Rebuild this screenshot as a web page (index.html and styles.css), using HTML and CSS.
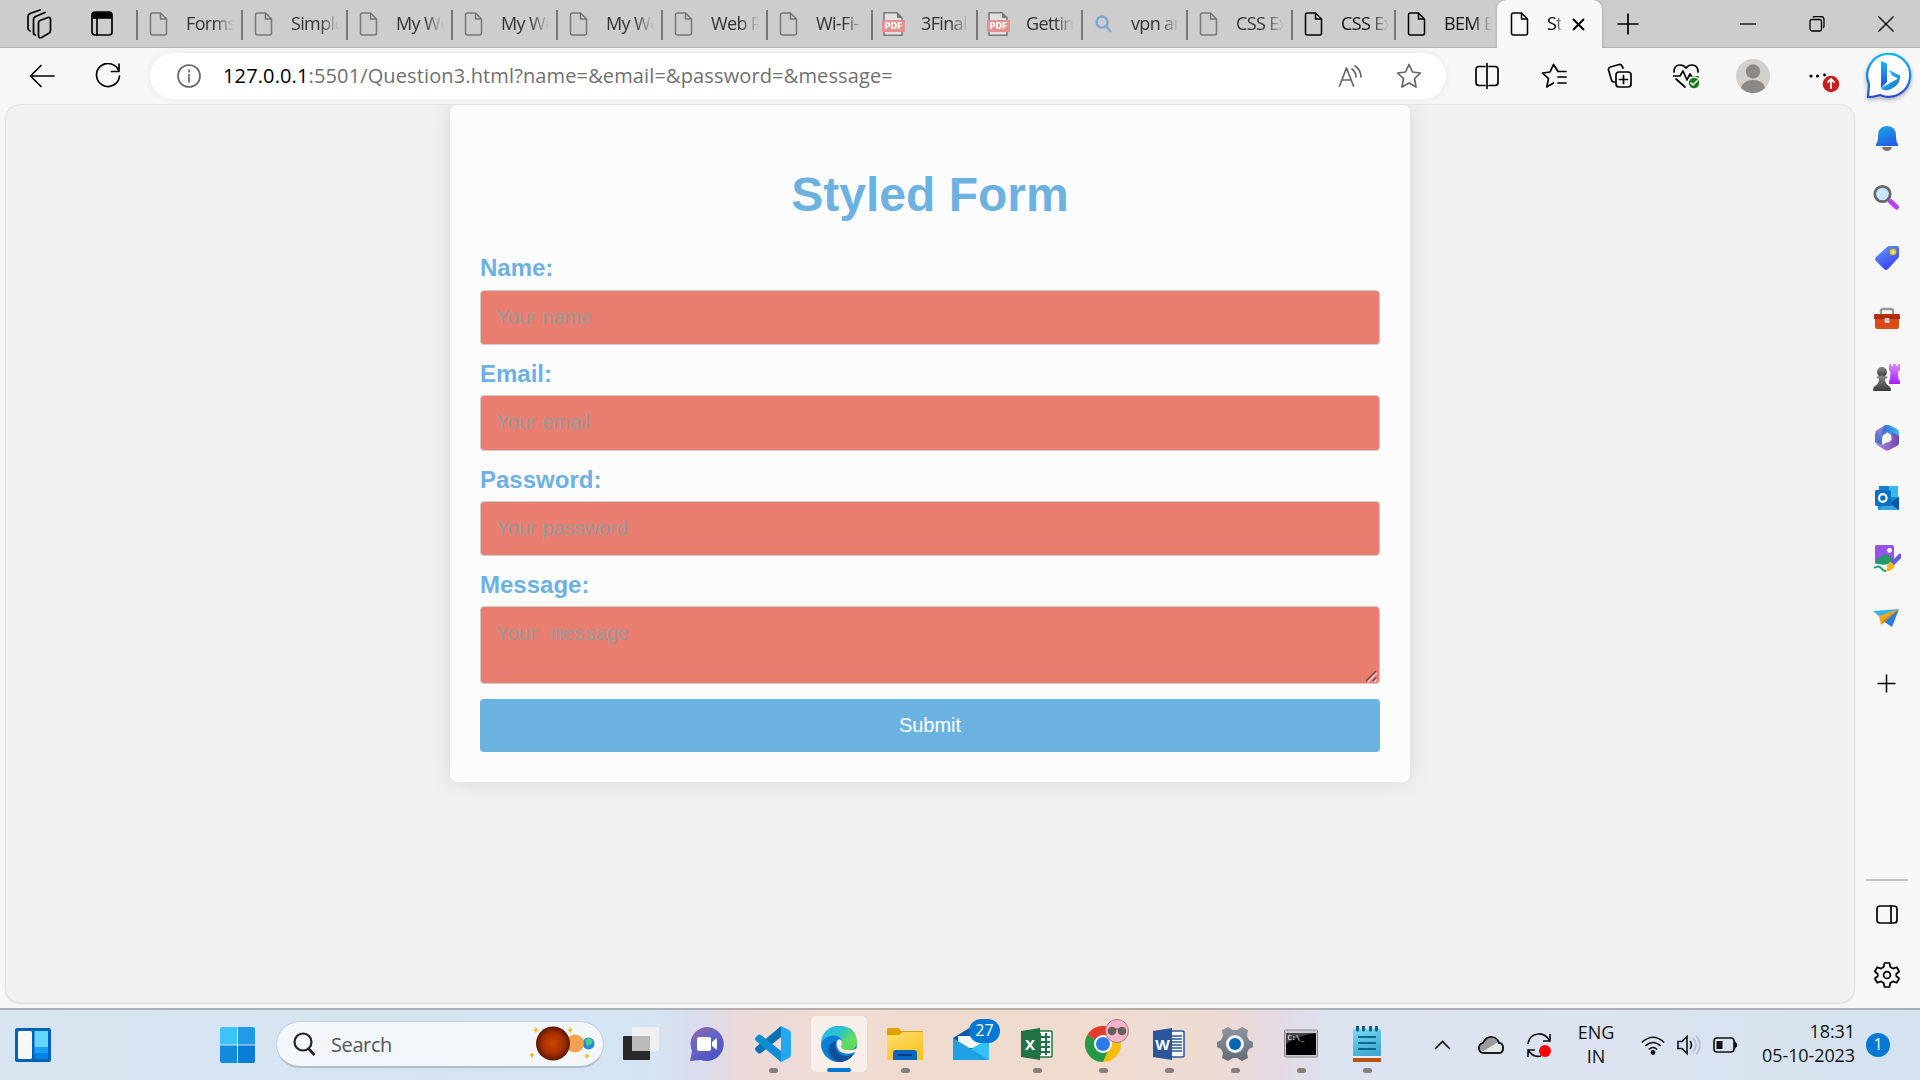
FILE: index.html
```html
<!DOCTYPE html>
<html lang="en">
<head>
<meta charset="utf-8">
<title>Styled Form</title>
<link rel="stylesheet" href="styles.css">
</head>
<body>
<svg class="defs" aria-hidden="true">
  <defs>
    <symbol id="page" viewBox="0 0 18 24"><path d="M3 1h8l6 6v14q0 2-2 2H3q-2 0-2-2V3q0-2 2-2zM11 1v6h6" fill="none" stroke="currentColor" stroke-width="1.5" stroke-linejoin="round"/></symbol>
    <symbol id="pdf" viewBox="0 0 23 24"><path d="M2 .8h13l5 5v17.4H2z" fill="#e2e2e2" stroke="#777" stroke-width="1.5"/><path d="M15 1v5h5z" fill="#777"/><rect y="8" width="23" height="12" rx="1" fill="#e58f8f"/><text x="11.5" y="17.3" text-anchor="middle" class="pdf-text">PDF</text></symbol>
    <linearGradient id="blue" x2="1" y2="1"><stop stop-color="#48cdff"/><stop offset="1" stop-color="#006fd0"/></linearGradient>
    <linearGradient id="bell" x2=".4" y2="1"><stop stop-color="#18a8e0"/><stop offset="1" stop-color="#2463e8"/></linearGradient>
    <linearGradient id="tag" x2=".6" y2="1"><stop stop-color="#62a2ff"/><stop offset="1" stop-color="#3b3cf0"/></linearGradient>
    <linearGradient id="purple" x2="0" y2="1"><stop stop-color="#d98cff"/><stop offset="1" stop-color="#a31fff"/></linearGradient>
    <linearGradient id="dark" x2="0" y2="1"><stop stop-color="#888"/><stop offset="1" stop-color="#3a3a3a"/></linearGradient>
    <linearGradient id="orange" x2="0" y2="1"><stop stop-color="#b83200"/><stop offset="1" stop-color="#a52c00"/></linearGradient>
    <linearGradient id="yellow" x2=".6" y2="1"><stop stop-color="#ffe070"/><stop offset="1" stop-color="#ffc222"/></linearGradient>
    <linearGradient id="chat" x1="0" y1="0" x2=".7" y2="1"><stop stop-color="#9a63a5"/><stop offset=".45" stop-color="#6866c4"/><stop offset="1" stop-color="#4d51c4"/></linearGradient>
    <linearGradient id="edgeTop" x2="1" y2=".5"><stop stop-color="#2cb6f2"/><stop offset=".5" stop-color="#2ac3cf"/><stop offset="1" stop-color="#6be04a"/></linearGradient>
    <linearGradient id="cyan" x2=".4" y2="1"><stop stop-color="#7edcf2"/><stop offset="1" stop-color="#41a9d2"/></linearGradient>
    <linearGradient id="steel" x2="0" y2="1"><stop stop-color="#8d969e"/><stop offset="1" stop-color="#626d77"/></linearGradient>
    <radialGradient id="planet"><stop stop-color="#cf4300"/><stop offset=".6" stop-color="#a83000"/><stop offset="1" stop-color="#5c1800"/></radialGradient>
    <linearGradient id="bing" x2="0" y2="1"><stop stop-color="#15b8ee"/><stop offset="1" stop-color="#2649dc"/></linearGradient>
    <linearGradient id="m365a" x2="1" y2="0"><stop stop-color="#3a70d2"/><stop offset="1" stop-color="#35bce8"/></linearGradient>
    <linearGradient id="m365b" x2="1" y2="0"><stop stop-color="#b58be0"/><stop offset="1" stop-color="#6d48ae"/></linearGradient>
    <linearGradient id="m365c" x2="0" y2="1"><stop stop-color="#a983dc"/><stop offset="1" stop-color="#2b72cc"/></linearGradient>
  </defs>
</svg>

<div class="desktop">
  <header class="tabstrip">
    <div class="strip-tools">
      <svg width="26" height="30" viewBox="0 0 26 30" class="line"><path d="M14 11.500l8-3q2.500-.5 2.500 2v11q0 2-2 3l-7 4q-3 1-3-2V13.500q0-1.500 1.500-2zM7.500 24V10.500q0-2 2-3l9.500-4M9.500 26q-2 0-2-3M2 20V7.500q0-2 2-3L14 1M4 22q-2-1-2-3"/></svg>
      <svg width="22" height="26" viewBox="0 0 22 26" class="line"><rect x="1" y="1" width="20" height="23" rx="3"/><path d="M2 2h18v5H2z" fill="#000"/><path d="M6 7v17"/></svg>
    </div>
    <nav class="tabs">
      <div class="tab"><svg class="favicon"><use href="#page"/></svg><span class="tab-title">Forms i</span></div>
      <div class="tab"><svg class="favicon"><use href="#page"/></svg><span class="tab-title">Simple</span></div>
      <div class="tab"><svg class="favicon"><use href="#page"/></svg><span class="tab-title">My Web</span></div>
      <div class="tab"><svg class="favicon"><use href="#page"/></svg><span class="tab-title">My Web</span></div>
      <div class="tab"><svg class="favicon"><use href="#page"/></svg><span class="tab-title">My Web</span></div>
      <div class="tab"><svg class="favicon"><use href="#page"/></svg><span class="tab-title">Web Pa</span></div>
      <div class="tab"><svg class="favicon"><use href="#page"/></svg><span class="tab-title">Wi-Fi-</span></div>
      <div class="tab"><svg class="favicon wide"><use href="#pdf"/></svg><span class="tab-title">3Final</span></div>
      <div class="tab"><svg class="favicon wide"><use href="#pdf"/></svg><span class="tab-title">Getting</span></div>
      <div class="tab"><svg class="favicon find" viewBox="0 0 18 24"><circle cx="7.500" cy="10" r="5.500"/><path d="M11.500 14l5 6"/></svg><span class="tab-title">vpn an</span></div>
      <div class="tab"><svg class="favicon"><use href="#page"/></svg><span class="tab-title">CSS Ex</span></div>
      <div class="tab loaded"><svg class="favicon"><use href="#page"/></svg><span class="tab-title">CSS Ex</span></div>
      <div class="tab loaded"><svg class="favicon"><use href="#page"/></svg><span class="tab-title">BEM Ex</span></div>
      <div class="tab active"><svg class="favicon"><use href="#page"/></svg><span class="tab-title">Sty</span><svg class="close" viewBox="0 0 13 13"><path d="M1 1l11 11M12 1L1 12"/></svg></div>
    </nav>
    <svg class="new-tab" width="22" height="22" viewBox="0 0 22 22"><path d="M11 .5v21M.5 11h21"/></svg>
    <div class="window-buttons">
      <svg width="16" height="16" viewBox="0 0 16 16"><path d="M0 8h16"/></svg>
      <svg width="16" height="16" viewBox="0 0 16 16"><rect x="1" y="3.500" width="11.500" height="11.500" rx="2"/><path d="M4 1.500q.500-1 2-1h6q3 0 3 3v6q0 2-1 2.500"/></svg>
      <svg width="16" height="16" viewBox="0 0 16 16"><path d="M.5.5l15 15M15.500.5L.5 15.500"/></svg>
    </div>
  </header>

  <div class="toolbar">
    <div class="nav-buttons">
      <svg width="26" height="24" viewBox="0 0 26 24" class="line"><path d="M25 12H2M12 1.500L1.500 12 12 22.500"/></svg>
      <svg width="26" height="26" viewBox="0 0 26 26" class="line"><path d="M24 8.500A11.500 11.500 0 1 0 24.500 13M24 1v7.500h-7.500"/></svg>
    </div>
    <div class="address">
      <svg width="24" height="24" viewBox="0 0 24 24" class="line grey"><circle cx="12" cy="12" r="11"/><path d="M12 10.500V18M12 6v1.800"/></svg>
      <span class="url"><b>127.0.0.1</b>:5501/Question3.html?name=&amp;email=&amp;password=&amp;message=</span>
      <svg width="24" height="24" viewBox="0 0 24 24" class="line grey"><path d="M1.500 22L8.500 4l7 18M4 16h9M14 5q4 3 4 8M17 2q6 4 6 11"/></svg>
      <svg width="26" height="26" viewBox="0 0 26 26" class="line grey"><path d="M13 1.500l3.500 7.500 8 1-6 5.700 1.600 8.300L13 20l-7.100 4 1.600-8.300-6-5.700 8-1z"/></svg>
    </div>
    <div class="tool-icons">
      <div class="cell"><svg width="24" height="26" viewBox="0 0 24 26" class="line"><path d="M10 3.500H4q-3 0-3 3v13q0 3 3 3h6M14 3.500h6q3 0 3 3v13q0 3-3 3h-6M12 .500v25"/></svg></div>
      <div class="cell"><svg width="26" height="26" viewBox="0 0 26 26" class="line"><path d="M17 8.500L12.500 1.500 9 9l-7.500 1 6 5.700L5.800 24l6.700-4M17.500 8.500H25M17 14h8M17 20h8"/></svg></div>
      <div class="cell"><svg width="26" height="26" viewBox="0 0 26 26" class="line"><path d="M16 5l-1-2q-1-2-3-1.500L3.500 4Q1 5 1.500 7l3 10q.5 2 3 2"/><rect x="9" y="9" width="15" height="15" rx="3"/><path d="M16.500 12.500v8M12.500 16.500h8"/></svg></div>
      <div class="cell"><svg width="28" height="26" viewBox="2 0 28 26" class="line"><path d="M3 9Q3 2 9 2q4 0 6 3 2-3 6-3 6 0 6 7M2 13h7l3-5 4 9 3-6 2 3h6M5 16l9 8"/><circle cx="23" cy="20" r="6" class="badge-green"/><path d="M20 20l2 2 4-4" stroke="#fff"/></svg></div>
      <div class="cell"><svg width="34" height="34" viewBox="0 0 34 34"><circle cx="17" cy="17" r="17" fill="#d3d0cd"/><circle cx="17" cy="12.500" r="7.200" fill="#8d8986"/><path d="M5 29q2-8 12-8t12 8q-5 5-12 5T5 29z" fill="#8d8986"/></svg></div>
      <div class="cell more"><svg width="34" height="34" viewBox="0 0 34 34"><g fill="#000"><circle cx="4" cy="17" r="1.600"/><circle cx="10.500" cy="17" r="1.600"/><circle cx="17.500" cy="16" r="1.400"/></g><circle cx="24" cy="25" r="8.300" fill="#c91d20"/><path d="M24 30V20.500M20.500 23.500l3.500-3.500 3.500 3.500" fill="none" stroke="#fff" stroke-width="1.800"/></svg></div>
    </div>
    <svg class="bing" width="46" height="46" viewBox="0 0 46 46"><path d="M2 44l1-13A21.500 21.500 0 1 1 14 42q-6 2-12 2z" fill="#fff" stroke="url(#bing)" stroke-width="2.200"/><path d="M15 8l6 2.500V29l-6 6z" fill="url(#bing)"/><path d="M23 17l11 5.500q1 8-8 13-8 4-11-.5l17-9.500-6-3z" fill="url(#blue)"/></svg>
  </div>

  <div class="body">
    <main class="page">
      <form class="card">
        <h1>Styled Form</h1>
        <label for="name">Name:</label>
        <input id="name" type="text" placeholder="Your name">
        <label for="email">Email:</label>
        <input id="email" type="email" placeholder="Your email">
        <label for="password">Password:</label>
        <input id="password" type="password" placeholder="Your password">
        <label for="message">Message:</label>
        <div class="message-box">
          <textarea id="message" placeholder="Your message"></textarea>
          <svg class="grip" width="13" height="13" viewBox="0 0 13 13"><path d="M1 11L11 1M7.500 11L11 7.500" stroke="#70504d"/><path d="M3 12L12 3M9.500 12L12 9.500" stroke="#f3cdc8"/></svg>
        </div>
        <button type="button">Submit</button>
      </form>
    </main>

    <aside class="sidebar">
      <div class="app"><svg viewBox="0 0 28 28"><path d="M9 23h10q-1 4-5 4t-5-4z" fill="#777"/><path d="M14 2q9 0 9 10 0 6 2 8v2H3v-2q2-2 2-8Q5 2 14 2z" fill="url(#bell)"/></svg></div>
      <div class="app"><svg viewBox="0 0 28 28"><path d="M17.500 17.500l6 5.500" stroke="#bd3df5" stroke-width="5" stroke-linecap="round"/><circle cx="9.500" cy="10" r="7.700" fill="#c9e7fc" stroke="#666" stroke-width="2.800"/></svg></div>
      <div class="app"><svg viewBox="0 0 28 28"><path d="M15 2h9q2 0 2 2v9L15 25q-2 2-4 0l-8-8q-2-2 0-4z" fill="url(#tag)"/><circle cx="20" cy="8" r="2.300" fill="#fff" stroke="#f5c400" stroke-width="2"/></svg></div>
      <div class="app"><svg viewBox="0 0 28 28"><path d="M8 10V7q0-2 2-2h8q2 0 2 2v3" fill="none" stroke="#999" stroke-width="2.300"/><path d="M2 14h24v9q0 2-2 2H4q-2 0-2-2z" fill="#db4c19"/><path d="M2 10h24q1 0 1 2v3H1v-3q0-2 1-2z" fill="url(#orange)"/><rect x="11.500" y="14" width="5" height="5" rx="1" fill="#ccc"/></svg></div>
      <div class="app"><svg viewBox="0 0 28 28"><path d="M16 0h2v2h2V0h3v2h2V0h2v6l-2 2 .5 7 1.500 2v3H16v-3l1-2 .5-7L16 6z" fill="url(#purple)"/><circle cx="9" cy="8" r="5" fill="url(#dark)"/><path d="M3 13q6-3 12 0l-3 2q0 5 4 7 2 1 2 4 0 1-1 1H1q-1 0-1-1 0-3 2-4 4-2 4-7z" fill="url(#dark)"/></svg></div>
      <div class="app"><svg viewBox="0 0 28 28"><path d="M12 1L4 6q-2 1-2 4v8l7 4V13l5-4z" fill="url(#m365c)"/><path d="M12 1h4l8 4q2 1 2 4v10l-8-4v-4l-4-3-5 3V6z" fill="url(#m365a)"/><path d="M26 12v7q0 2-2 3l-8 4q-2 1-4 0l-8-5-2-3 7 3 10-6V8z" fill="url(#m365b)"/><circle cx="14" cy="14" r="4.600" fill="#f7f7f7"/></svg></div>
      <div class="app"><svg viewBox="0 0 28 28"><path d="M6 2h19v12H6z" fill="#36b9ef"/><path d="M6 2h10v12H6z" fill="#137fca"/><path d="M5 13h21v13H5z" fill="#1689d8"/><path d="M26 13v13L15 20z" fill="#0a55a0"/><path d="M5 26l9-8 12 8z" fill="#32a4e4"/><rect x="2" y="6" width="16" height="16" rx="1.500" fill="#0871c4"/><circle cx="9.800" cy="14" r="3.800" fill="none" stroke="#fff" stroke-width="2.200"/></svg></div>
      <div class="app"><svg viewBox="0 0 28 28"><rect x="2" y="1" width="19" height="19" rx="2" fill="#9755e8"/><path d="M2 18q9-10 14-6l5 4v2q-9 5-19 1z" fill="#239b68"/><circle cx="16.500" cy="6.500" r="2.400" fill="#fff"/><path d="M18 21L27 12" stroke="#635bea" stroke-width="4.500" stroke-linecap="round"/><path d="M18 18l4 4q-3 6-10 5 3-2 2-5 1-4 4-4z" fill="#e9b42c"/><path d="M1 24q5-3 7 0t5 3" fill="none" stroke="#22a06b" stroke-width="2"/></svg></div>
      <div class="app"><svg viewBox="0 0 28 28"><path d="M0 7l26-2-18 9z" fill="#37b3eb"/><path d="M26 5l-7 18-9-6z" fill="#287be8"/><path d="M26 5L6 12l2 9 4-6z" fill="#f6a719"/><path d="M26 5L10 16l-2 5 5-4z" fill="#d18b15"/></svg></div>
      <div class="app add"><svg viewBox="0 0 28 28"><path d="M13.500 4.500v18M4.500 13.500h18" stroke="#000" stroke-width="1.500"/></svg></div>
      <div class="side-bottom">
        <div class="app"><svg viewBox="0 0 28 28" class="line"><rect x="4" y="5" width="20" height="17" rx="3"/><path d="M18 5v17"/></svg></div>
        <div class="app"><svg viewBox="0 0 28 28" class="line"><path d="M11.500 2h5l.8 4 2.700 1.600 3.700-1.400 2.500 4.300-3 2.500v2l3 2.500-2.500 4.300-3.700-1.400-2.700 1.600-.8 4h-5l-.8-4L8 20.400l-3.700 1.400-2.500-4.300 3-2.500v-2l-3-2.500 2.500-4.300L8 7.600 10.700 6z"/><circle cx="14" cy="14" r="3.400"/></svg></div>
      </div>
    </aside>
  </div>

  <footer class="taskbar">
    <svg class="widgets" width="36" height="34" viewBox="0 0 36 34"><rect width="36" height="34" rx="2" fill="#0063b8"/><rect x="3" y="3" width="14" height="28" rx="1.500" fill="#f7f7f7"/><path d="M19.500 3H33v16H19.500z" fill="#65d6ff"/><path d="M19.500 19H33v6H19.500z" fill="#1ba0f5"/><path d="M19.500 25H33v6H19.500z" fill="#0583ea"/></svg>
    <svg class="start" width="35" height="36" viewBox="0 0 35 36"><path d="M0 2q0-2 2-2h15v17.500H0z" fill="#3dc2fa"/><path d="M18 0h15q2 0 2 2v15.500H18z" fill="#209be8"/><path d="M0 18.500h17V36H2q-2 0-2-2z" fill="#128bdc"/><path d="M18 18.500h17V34q0 2-2 2H18z" fill="#087dd5"/></svg>
    <div class="search">
      <svg width="23" height="24" viewBox="0 0 23 24"><circle cx="10" cy="10" r="8.500" fill="none" stroke="#222" stroke-width="2.200"/><path d="M15.500 16.500L21.500 23" stroke="#222" stroke-width="2.600"/></svg>
      <span>Search</span>
      <svg width="66" height="36" viewBox="0 0 66 36"><circle cx="59.500" cy="17.500" r="6" fill="#1f8bd8"/><path d="M56 14q4-4 8 1-2 5-6 5z" fill="#47cf8a"/><circle cx="46" cy="17.500" r="9" fill="#f3a14c"/><circle cx="24" cy="17.500" r="17" fill="url(#planet)"/><path d="M7 1l1 2 2 1-2 1-1 2-1-2-2-1 2-1zM41 0l1 3 2 1-2 1-1 3-1-3-2-1 2-1zM3 26l1 2 2 1-2 1-1 3-1-3-2-1 2-1zM58 27l1 2 2 1-2 1-1 2-1-2-2-1 2-1z" fill="#eabd2b"/></svg>
    </div>
    <div class="task-apps">
      <div class="task"><svg viewBox="0 0 36 36"><rect y="10" width="27" height="24" rx="1" fill="#292929"/><rect x="9" y="1" width="27" height="24" rx="1" fill="#f1f1f1" opacity=".92"/><path d="M9 10h18v15H9z" fill="#bbb"/></svg></div>
      <div class="task"><svg viewBox="0 0 36 36"><path d="M18 1a17 17 0 1 1-6 33L1 35l2-10A17 17 0 0 1 18 1z" fill="url(#chat)"/><rect x="8" y="11" width="14" height="14" rx="2" fill="#fff"/><path d="M23 16l5-4v12l-5-4z" fill="#fff"/></svg></div>
      <div class="task running"><svg viewBox="0 0 36 36"><path d="M26 0v11L6 27q-2 1-3 0l-2-2q-2-2 0-4z" fill="#0871b3"/><path d="M26 36V25L6 9Q4 8 3 9l-2 2q-2 2 0 4z" fill="#0a8ed4"/><path d="M26 0l8 4q2 1 2 3v22q0 2-2 3l-8 4z" fill="#27a5f3"/></svg></div>
      <div class="task current"><svg viewBox="0 0 36 36"><circle cx="18" cy="18" r="18" fill="#0b7fd8"/><path d="M0 18Q2 0 18 0q17 0 18 15 0 9-9 9-7 0-7-4 3-3 1-6Q17 8 9 10q-7 2-9 8z" fill="url(#edgeTop)"/><path d="M14 15q-5 8 1 14 6 5 13 3-5 4-11 4Q8 34 7 25q0-8 7-10z" fill="#0c64b8"/><path d="M15 15q-3 9 5 14 7 3 13-2-4 8-14 9-9-3-10-11 0-7 6-10z" fill="#124f96"/><path d="M16 15q-2 9 6 12 6 2 12-1 2-1 3 0V21q-3 4-10 3-7-1-7-4 3-3 0-6-2-2-4 1z" fill="#f8eeea"/><path d="M20 20q3-3 1-6l6-2 9 3q0 9-9 9-7 0-7-4z" fill="#5fdc5e"/></svg></div>
      <div class="task running"><svg viewBox="0 0 36 36"><path d="M0 8V3q0-1 1-1h10q2 0 3 3h21q1 0 1 1v8H0z" fill="#dfa000"/><path d="M0 9h12l4-3h20v28H0z" fill="url(#yellow)"/><path d="M6 34V27q0-3 3-3h18q3 0 3 3v7z" fill="#0868bf"/><path d="M11 29h14" stroke="#033b79" stroke-width="2"/></svg></div>
      <div class="task"><svg viewBox="0 0 36 36"><path d="M0 12L18 1l18 11v15H0z" fill="#0b57a8"/><path d="M5 10h26v12H5z" fill="#f5f5f5"/><path d="M36 12v22H0l18-11z" fill="#35c1f1"/><path d="M0 12l36 22H0z" fill="#20a1e3"/></svg><span class="count">27</span></div>
      <div class="task running"><svg viewBox="0 0 36 36"><rect x="14" y="5" width="19" height="26" rx="1" fill="#fff" stroke="#217346" stroke-width="1.500"/><path d="M21 7v22M27 7v22M20 11h11M20 16h11M20 21h11M20 26h11" stroke="#217346" stroke-width="2"/><path d="M2 5l19-3v32L2 31z" fill="#217346"/><text x="11" y="24" text-anchor="middle" class="office">X</text></svg></div>
      <div class="task running"><svg viewBox="0 0 36 36"><circle cx="18" cy="18" r="18" fill="#fbbc09"/><path d="M18 18L2.400 9A18 18 0 0 1 33.600 9z" fill="#e33b2e"/><path d="M18 18h8L18 36A18 18 0 0 1 2.400 9z" fill="#279847"/><path d="M18 9h15.600A18 18 0 0 1 36 18L26 18z" fill="#fbbc09"/><circle cx="18" cy="18" r="9" fill="#fff"/><circle cx="18" cy="18" r="7" fill="#2c7be9"/></svg><svg class="profile" viewBox="0 0 24 24"><circle cx="12" cy="12" r="11.500" fill="#f5b4ca" stroke="#9c7b87"/><circle cx="7" cy="12" r="4.300" fill="#66605f"/><circle cx="17" cy="12" r="4.300" fill="#66605f"/><path d="M9 10h6" stroke="#555"/></svg></div>
      <div class="task running"><svg viewBox="0 0 36 36"><rect x="14" y="5" width="19" height="26" rx="1" fill="#fff" stroke="#2b579a" stroke-width="1.500"/><path d="M20 10h11M20 13h11M20 16h11M20 19h11M20 22h11M20 25h11" stroke="#2b579a" stroke-width="1.300"/><path d="M2 5l19-3v32L2 31z" fill="#2b579a"/><text x="11.500" y="24" text-anchor="middle" class="office">W</text></svg></div>
      <div class="task running"><svg viewBox="0 0 36 36"><path d="M11 1l5 3h4l5-3 6 3-1 6 2 4 4 2v5l-4 2-2 4 1 5-6 3-5-3h-4l-5 3-6-3 1-5-2-4-4-2v-5l4-2 2-4-1-6z" fill="url(#steel)"/><circle cx="18" cy="18" r="9" fill="#f3f3f3"/><circle cx="18" cy="18" r="6" fill="#0866b7"/></svg></div>
      <div class="task running"><svg viewBox="0 0 36 36"><rect x="1.500" y="4" width="33" height="27" rx="1" fill="#c9cdd2" stroke="#888"/><path d="M3 7h30v22H3z" fill="#000"/><path d="M3 7h30Q15 9 3 18z" fill="#444"/><text x="4.500" y="14" class="prompt">C:\_</text></svg></div>
      <div class="task running"><svg viewBox="0 0 36 36"><path d="M4 30h28v6H4z" fill="#b45418"/><path d="M4 28h28v4H4z" fill="#eee"/><path d="M4 5q0-2 2-2h24q2 0 2 2v25H4z" fill="url(#cyan)"/><path d="M8.500 1v3M14.500 1v3M21.500 1v3M27.500 1v3" stroke="#075e86" stroke-width="3" stroke-linecap="round"/><path d="M9 11h18M9 17h18M9 23h18" stroke="#086793" stroke-width="2"/></svg></div>
    </div>
    <div class="tray">
      <svg class="chevron" width="17" height="10" viewBox="0 0 17 10"><path d="M1 9l7.500-7.500L16 9"/></svg>
      <svg class="cloud" width="26" height="18" viewBox="0 0 26 18"><path d="M5 7Q8 1 13 1q6 0 8 6 4 0 4 5 0 5-4 5H6q-5 0-5-5 0-4 4-5z" fill="#e6e6e6"/><path d="M5 7Q8 1 13 1q5 0 7 5l-6 4-9 5q-4-1-4-3 0-4 4-5z" fill="#9b9b9b" stroke="none"/><path d="M5 7Q8 1 13 1q6 0 8 6 4 0 4 5 0 5-4 5H6q-5 0-5-5 0-4 4-5z"/></svg>
      <svg class="sync" width="24" height="26" viewBox="0 0 24 26"><path d="M1 12Q2 3 11 2q7-1 12 7M23 2v7h-7M14 24q-8 2-13-6M1 25v-7h7"/><circle cx="18" cy="19" r="6" fill="#f00" stroke="none"/></svg>
      <div class="lang"><span>ENG</span><span>IN</span></div>
      <div class="status">
        <svg width="24" height="24" viewBox="0 0 24 24"><path d="M.8 9.500q11.200-10.500 22.400 0M4.300 13q7.700-7 15.400 0M7.800 16.500q4.200-4 8.400 0"/><circle cx="12" cy="19.500" r="1.600" fill="#111"/></svg>
        <svg width="24" height="24" viewBox="0 0 24 24"><path d="M1 8.500h4l5-5v17l-5-5H1zM13 8q3 4 0 8"/><path d="M16 5q6 7 0 14M19 2.500q8 9.500 0 19" stroke="#b5bdc8"/></svg>
        <svg width="24" height="24" viewBox="0 0 24 24"><rect x="1" y="5" width="20" height="14" rx="3"/><path d="M3.500 8h6v8h-6z" fill="#111" stroke="none"/><path d="M22 9.500v5l1.200-1.500v-2z" fill="#111"/></svg>
      </div>
      <div class="clock"><span>18:31</span><span>05-10-2023</span></div>
      <span class="notice">1</span>
    </div>
  </footer>
</div>
</body>
</html>
```
FILE: styles.css
```css
* { box-sizing: border-box; }
body { margin: 0; overflow: hidden; font-family: "Open Sans", "Noto Sans", sans-serif; color: #111; }
svg { display: block; flex: none; }
.defs { position: absolute; width: 0; height: 0; }
.line { fill: none; stroke: #000; stroke-width: 1.7; stroke-linejoin: round; stroke-linecap: round; }
.line.grey { stroke: #666; }
.desktop { width: 1920px; height: 1080px; display: flex; flex-direction: column; background: #f7f7f7; }

/* tab strip */
.tabstrip { height: 48px; flex: none; display: flex; align-items: center; background: #cdcdcd; box-shadow: inset 0 -2px 1px -1px #b2b2b2; }
.strip-tools { width: 136px; padding-left: 26px; display: flex; gap: 39px; align-items: center; flex: none; }
.tabs { display: flex; height: 48px; }
.tab { width: 105px; height: 48px; padding-left: 13px; display: flex; align-items: center; color: #333; background: linear-gradient(#777, #777) 0 10px / 2px 30px no-repeat; }
.tab .favicon { width: 19px; height: 24px; color: #777; margin-right: 18px; }
.tab .favicon.wide { width: 23px; margin: 0 16px 0 -2px; }
.tab .favicon.find { fill: none; stroke: #7fa9d3; stroke-width: 2.5; }
.tab-title { width: 48px; padding-bottom: 2px; overflow: hidden; white-space: nowrap; font-size: 18px; line-height: 28px; letter-spacing: -.65px; -webkit-mask-image: linear-gradient(90deg, #000 60%, transparent); mask-image: linear-gradient(90deg, #000 60%, transparent); }
.tab.loaded { width: 103px; color: #111; }
.tab.loaded .favicon, .tab.active .favicon { color: #000; }
.tab.active { background: #f7f7f7; border-radius: 9px 9px 0 0; color: #000; box-shadow: 0 0 3px #999; clip-path: inset(0 -4px 0 -4px); }
.tab.active .tab-title { width: 15px; }
.close { width: 13px; height: 13px; margin-left: 10px; stroke: #000; stroke-width: 1.9; }
.new-tab { margin-left: 15px; margin-bottom: 1px; stroke: #000; stroke-width: 1.7; }
.window-buttons { margin-left: auto; padding-right: 26px; display: flex; gap: 53px; fill: none; stroke: #000; stroke-width: 1.3; }
.pdf-text { font: bold 8px "DejaVu Sans", sans-serif; fill: #fff; }

/* toolbar */
.toolbar { height: 56px; flex: none; display: flex; align-items: center; padding-bottom: 0; }
.nav-buttons { width: 150px; padding-left: 29px; display: flex; align-items: center; gap: 40px; }
.address { width: 1296px; height: 46px; border-radius: 23px; background: #fff; box-shadow: 0 0 6px #e6e6e6; display: flex; align-items: center; padding: 0 24px 0 27px; }
.url { flex: 1; padding: 0 0 2px 22px; font-size: 20px; letter-spacing: .13px; color: #707070; white-space: nowrap; }
.url b { font-weight: 400; color: #000; }
.address .url + svg { margin-right: 34px; }
.tool-icons { display: flex; padding-left: 8px; }
.cell { width: 66.500px; display: flex; align-items: center; justify-content: center; }
.cell.more { width: 72px; padding-left: 3px; }
.badge-green { fill: #107c10; stroke: #f7f7f7; }
.bing { margin-left: 7px; filter: drop-shadow(0 2px 2px #aaa); }

/* page and sidebar */
.body { height: 904px; flex: none; display: flex; padding: 0 0 5px 5px; }
.page { width: 1850px; flex: none; border: 1px solid #e3e3e3; border-radius: 15px; background: #f1f1f1; overflow: hidden; box-shadow: 0 1px 2px #ddd; }
.card { width: 960px; height: 677px; margin: 0 0 0 444px; padding: 30px; border-radius: 7px; background: #fcfcfc; box-shadow: 0 0 22px rgba(0, 0, 0, .11); display: flex; flex-direction: column; font-family: "Liberation Sans", Arial, sans-serif; }
.card h1 { margin: 31.500px 0 32.250px; font-size: 48px; line-height: 55px; text-align: center; color: #6cb2e1; }
.card label { font-size: 24px; font-weight: bold; line-height: 27px; margin-bottom: 8.250px; color: #6cb2e1; }
.card input, .card textarea { display: block; width: 900px; height: 55.250px; margin: 0 0 15px; padding: 15px; border: 1px solid #ccc; border-radius: 4px; background: #e97d70; font: 20px/23px "Liberation Sans", Arial, sans-serif; outline: 0; }
.card h1 + label { margin-bottom: 9.250px; }
.card textarea { height: 78px; padding-top: 16px; resize: none; overflow: hidden; font-family: "Liberation Mono", monospace; letter-spacing: -1px; }
.card ::placeholder { color: #9a9a98; opacity: 1; }
.message-box { position: relative; height: 93px; }
.grip { position: absolute; right: 2px; top: 64px; stroke-width: 1.500; }
.card button { height: 53px; border: 0; border-radius: 4px; background: #6cb2e1; color: #fff; font: 20px "Liberation Sans", Arial, sans-serif; }
.sidebar { width: 63px; padding-top: 4px; display: flex; flex-direction: column; align-items: center; }
.app { height: 60px; display: flex; align-items: center; justify-content: center; }
.app svg { width: 28px; height: 28px; }
.app.add { height: 72px; }
.side-bottom { margin: auto 0 -2px; width: 42px; padding-top: 4px; border-top: 2px solid #c4c4c4; }

/* taskbar */
.taskbar { height: 72px; flex: none; display: flex; align-items: center; padding-bottom: 1px; border-top: 2px solid rgba(90, 90, 90, .35); background: linear-gradient(90deg, #d8e4f0 0, #d5e4f3 650px, #dcdcec 705px, #ecdada 740px, #f0dccf 900px, #f0dccf 1080px, #ecdad5 1230px, #e4dae5 1280px, #dce2ef 1330px, #dce3f1 1600px, #d5e2ef 1920px) border-box; }
.widgets { margin-left: 15px; }
.start { margin-left: 169px; }
.search { width: 328px; height: 47px; margin: 0 4px 0 21px; padding: 0 8px 0 16px; border: 1px solid #c0d0e0; border-bottom: 2px solid #afbdcc; border-radius: 24px; background: #f3f7fc; display: flex; align-items: center; font-size: 20px; color: #555; }
.search span { flex: 1; padding-left: 15px; letter-spacing: -.4px; }
.task-apps { display: flex; }
.task { position: relative; width: 66px; height: 70px; padding-top: 16px; display: flex; flex-direction: column; align-items: center; }
.task > svg { width: 36px; height: 36px; }
.task.running::after { content: ""; width: 9px; height: 5px; margin-top: 6px; border-radius: 3px; background: #85807e; }
.task.current { width: 58px; height: 58px; margin: 5px 4px 0; padding-top: 10px; border: 1px solid #eadbd4; border-radius: 6px; background: #f8eeea; }
.task.current::after { content: ""; width: 24px; height: 5px; margin-top: 6px; border-radius: 3px; background: #0078d7; }
.count { position: absolute; left: 31px; top: 9px; width: 31px; height: 24px; border-radius: 12px; background: #0078d4; color: #fff; font-size: 16px; line-height: 23px; text-align: center; }
.task > .profile { position: absolute; left: 35px; top: 9px; width: 24px; height: 24px; }
.office { font: bold 15px "Open Sans", sans-serif; fill: #fff; }
.prompt { font: 7px "DejaVu Sans Mono", monospace; fill: #fff; }
.tray { margin-left: 34px; display: flex; align-items: center; font-size: 18px; line-height: 24px; letter-spacing: -.1px; }
.tray svg { fill: none; stroke: #111; stroke-width: 1.6; }
.cloud { margin-left: 27px; }
.sync { margin-left: 23px; }
.lang { width: 90px; padding-bottom: 2px; display: flex; flex-direction: column; align-items: center; }
.status { display: flex; gap: 12px; }
.clock { width: 118px; padding-bottom: 3px; display: flex; flex-direction: column; align-items: flex-end; }
.notice { width: 24px; height: 24px; margin-left: 11px; border-radius: 12px; background: #0078d4; color: #fff; font-size: 16px; line-height: 23px; text-align: center; }
```
